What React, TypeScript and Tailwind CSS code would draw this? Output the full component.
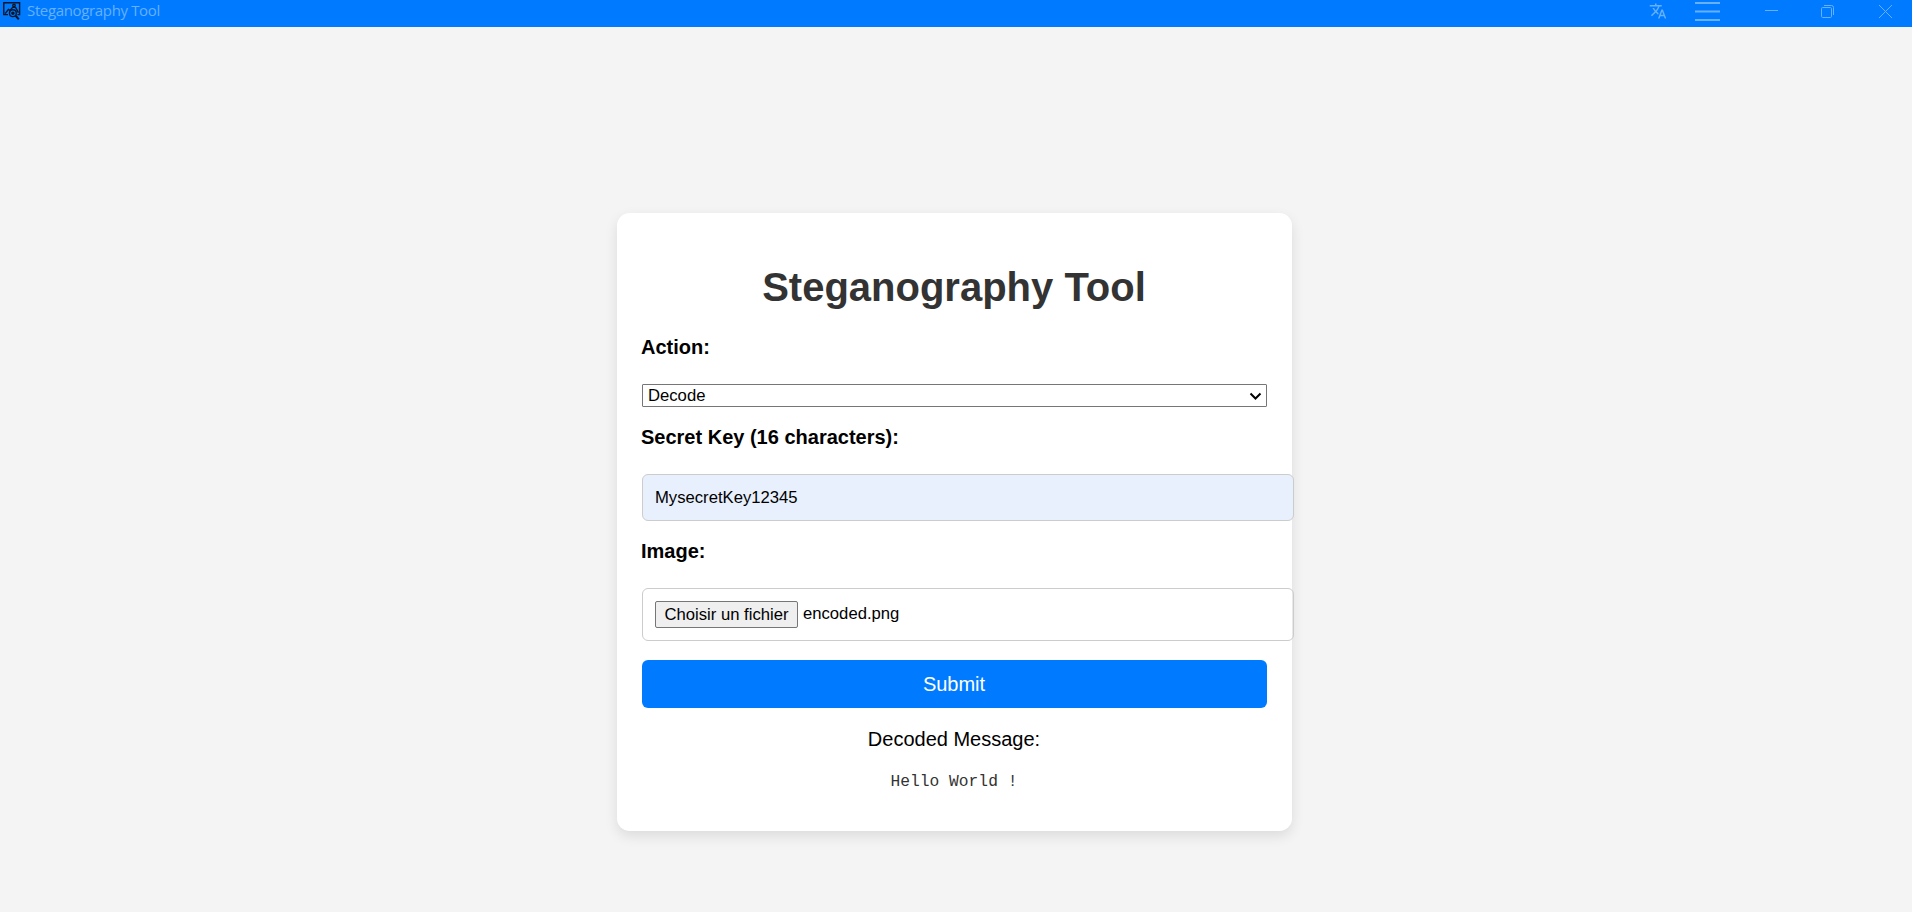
import React from "react";

function AppIcon() {
  return (
    <svg className="h-[18px] w-[18px]" viewBox="0 0 18 18" fill="none" stroke="#06172b" strokeWidth="1.4">
      <path d="M5 12.6H0.8V0.8H16.6V12.6H14.5" />
      <path d="M2.2 11.6L5.4 7.4L7 8.4L9.6 5.4H12.6L15.4 10.6" />
      <circle cx="11" cy="3.4" r="1.2" />
      <circle cx="9.9" cy="11.2" r="3.4" />
      <circle cx="9.9" cy="11.2" r="1.1" fill="#06172b" />
      <path d="M12.6 13.8L15.8 17.2" strokeWidth="2" />
    </svg>
  );
}

function TitleBar() {
  return (
    <header className="flex h-[27px] shrink-0 items-start bg-[#007bff] pl-[3px] text-[#66b0ff]">
      <div className="pt-[2px]">
        <AppIcon />
      </div>
      <span className="ml-[6px] whitespace-nowrap font-['Open_Sans','Noto_Sans',sans-serif] text-[15px] leading-[20px] tracking-[-0.35px]">
        Steganography Tool
      </span>
      <div className="ml-auto flex items-start">
        <svg className="mt-[2px] h-[18px] w-[18px]" viewBox="0 0 24 24" fill="currentColor">
          <path d="m12.87 15.07-2.54-2.51.03-.03A17.52 17.52 0 0 0 14.07 6H17V4h-7V2H8v2H1v2h11.17C11.5 7.92 10.44 9.75 9 11.35 8.07 10.32 7.3 9.19 6.69 8h-2c.73 1.63 1.73 3.17 2.98 4.56l-5.09 5.02L4 19l5-5 3.11 3.11.76-2.04zM18.5 10h-2L12 22h2l1.12-3h4.75L21 22h2l-4.5-12zm-2.62 7 1.62-4.33L19.12 17h-3.24z" />
        </svg>
        <svg className="ml-[28px] h-[22px] w-[25px]" viewBox="0 0 25 22" fill="none" stroke="currentColor" strokeWidth="2">
          <path d="M0 3H25M0 11.5H25M0 20H25" />
        </svg>
        <svg className="ml-[45px] h-[22px] w-[13px]" viewBox="0 0 13 22" fill="none" stroke="currentColor">
          <path d="M0 10.5H13" />
        </svg>
        <svg className="ml-[43px] h-[22px] w-[13px]" viewBox="0 0 13 22" fill="none" stroke="currentColor">
          <rect x="0.5" y="7.5" width="10" height="10" rx="1.2" />
          <path d="M3 5.5H10.5Q12.5 5.5 12.5 7.5V15" />
        </svg>
        <svg className="ml-[45px] mr-[20px] h-[22px] w-[13px]" viewBox="0 0 13 22" fill="none" stroke="currentColor">
          <path d="M0 5L13 18M13 5L0 18" />
        </svg>
      </div>
    </header>
  );
}

function Label({ children }: { children: React.ReactNode }) {
  return <label className="-ml-px block text-[20px] font-bold leading-[23px]">{children}</label>;
}

export default function App() {
  return (
    <div className="flex h-[912px] w-[1912px] flex-col overflow-hidden bg-[#f4f4f4] font-['Liberation_Sans',Arial,sans-serif] text-black">
      <TitleBar />
      <main className="flex flex-1 items-start pl-[617px] pt-[186px]">
        <section className="flex h-[618px] w-[675px] flex-col rounded-[12.5px] bg-white px-[25px] pt-[51px] shadow-[0_5px_12.5px_rgba(0,0,0,0.1)]">
          <h1 className="pr-px text-center text-[40px] font-bold leading-[46px] text-[#333]">Steganography Tool</h1>
          <div className="mt-[26px]">
            <Label>Action:</Label>
          </div>
          <div className="mt-[25px] flex h-[23px] items-center justify-between rounded-[1px] border border-[#767676] bg-white pl-[5px] pr-[4px] text-[16.67px] leading-[21px]">
            <span>Decode</span>
            <svg className="h-[12px] w-[13px]" viewBox="0 0 13 12" fill="none" stroke="currentColor" strokeWidth="2">
              <path d="M1.5 3.5L6.5 8.5L11.5 3.5" />
            </svg>
          </div>
          <div className="mt-[19px]">
            <Label>Secret Key (16 characters):</Label>
          </div>
          <input
            readOnly
            value="MysecretKey12345"
            className="mt-[25px] h-[47px] w-[652px] shrink-0 rounded-[6px] border border-[#ccc] bg-[#e8f0fe] px-[12px] text-[16.67px] outline-none"
          />
          <div className="mt-[19px]">
            <Label>Image:</Label>
          </div>
          <div className="mt-[25px] flex h-[53px] w-[652px] shrink-0 items-start rounded-[6px] border border-[#ccc] px-[12px] pt-[12px] text-[16.67px]">
            <button className="h-[27px] w-[143px] rounded-[2px] border border-[#767676] bg-[#efefef] leading-[25px]">
              Choisir un fichier
            </button>
            <span className="ml-[5px] leading-[25px]">encoded.png</span>
          </div>
          <button className="mt-[19px] h-[48px] shrink-0 rounded-[6px] bg-[#007bff] pr-px text-[20px] text-white">Submit</button>
          <p className="mt-[20px] pr-px text-center text-[20px] leading-[23px]">Decoded Message:</p>
          <pre className="mt-[22px] pr-px text-center font-['Liberation_Mono',monospace] text-[16.25px] leading-[18px] text-[#333]">Hello World !</pre>
        </section>
      </main>
    </div>
  );
}
